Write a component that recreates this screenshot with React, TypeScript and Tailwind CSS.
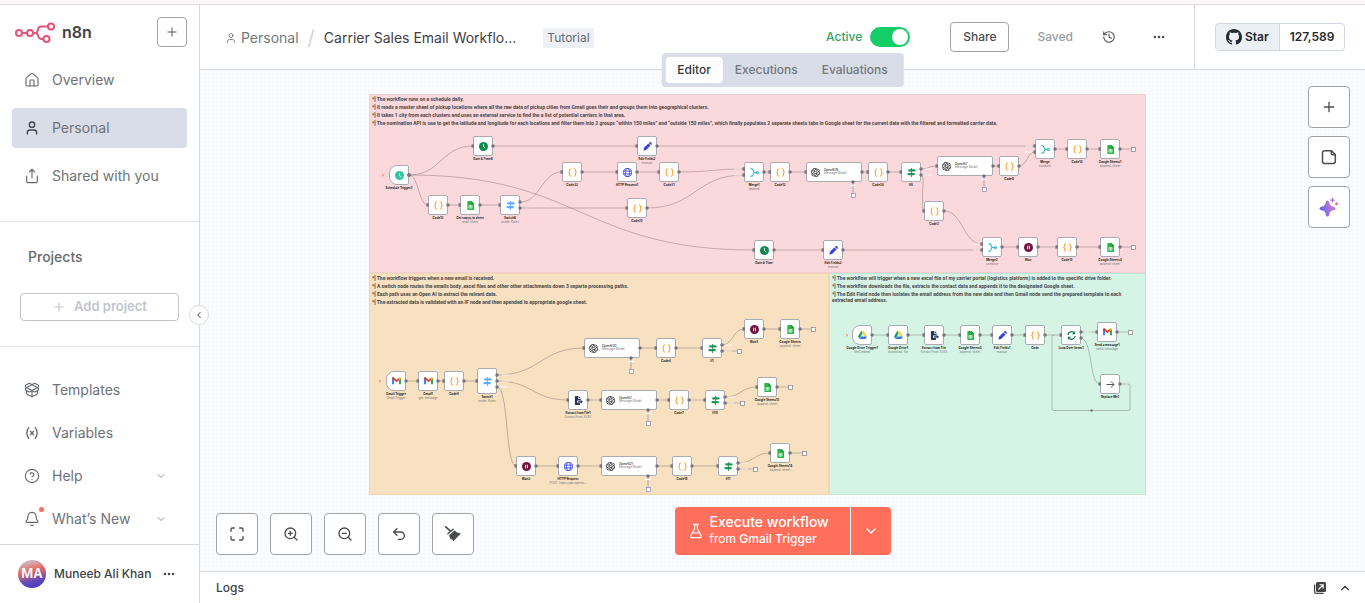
import React from "react";
import {
  Bell,
  ChevronDown,
  ChevronLeft,
  ChevronUp,
  CircleHelp,
  Ellipsis,
  FlaskConical,
  History,
  House,
  Maximize,
  PackageOpen,
  Plus,
  Share,
  Undo2,
  User,
  ZoomIn,
  ZoomOut,
} from "lucide-react";

type Kind =
  | "clock"
  | "date"
  | "edit"
  | "code"
  | "http"
  | "sheets"
  | "switch"
  | "merge"
  | "openai"
  | "if"
  | "wait"
  | "gmail"
  | "file"
  | "drive"
  | "loop"
  | "arrow";

type WorkflowNode = {
  x: number;
  y: number;
  kind: Kind;
  label: string;
  sub?: string;
  trigger?: boolean;
};

/* Workflow coordinates of the board's top left corner. */
const ORIGIN_X = 369;
const ORIGIN_Y = 94;

const nodes: WorkflowNode[] = [
  { x: 399, y: 175, kind: "clock", label: "Schedule Trigger3", trigger: true },
  { x: 483, y: 146, kind: "date", label: "Date & Time6" },
  { x: 647, y: 146, kind: "edit", label: "Edit Fields2", sub: "manual" },
  { x: 572, y: 172, kind: "code", label: "Code33" },
  { x: 627, y: 172, kind: "http", label: "HTTP Request1" },
  { x: 669, y: 172, kind: "code", label: "Code21" },
  { x: 438, y: 205, kind: "code", label: "Code12" },
  { x: 470, y: 205, kind: "sheets", label: "Get row(s) in sheet", sub: "read: sheet" },
  { x: 510, y: 205, kind: "switch", label: "Switch6", sub: "mode: Rules" },
  { x: 637, y: 208, kind: "code", label: "Code22" },
  { x: 754, y: 172, kind: "merge", label: "Merge1", sub: "append" },
  { x: 780, y: 172, kind: "code", label: "Code13" },
  { x: 834, y: 172, kind: "openai", label: "OpenAI76", sub: "Message Model" },
  { x: 878, y: 172, kind: "code", label: "Code24" },
  { x: 911, y: 172, kind: "if", label: "If6" },
  { x: 965, y: 166, kind: "openai", label: "OpenAI7", sub: "Message Model" },
  { x: 1009, y: 166, kind: "code", label: "Code6" },
  { x: 1045, y: 149, kind: "merge", label: "Merge", sub: "combine" },
  { x: 1077, y: 149, kind: "code", label: "Code14" },
  { x: 1110, y: 149, kind: "sheets", label: "Google Sheets1", sub: "append: sheet" },
  { x: 934, y: 211, kind: "code", label: "Code2" },
  { x: 764, y: 250, kind: "date", label: "Date & Time" },
  { x: 833, y: 250, kind: "edit", label: "Edit Fields3", sub: "manual" },
  { x: 992, y: 247, kind: "merge", label: "Merge2", sub: "combine" },
  { x: 1028, y: 247, kind: "wait", label: "Wait" },
  { x: 1067, y: 247, kind: "code", label: "Code15" },
  { x: 1110, y: 247, kind: "sheets", label: "Google Sheets4", sub: "append: sheet" },
  { x: 396, y: 381, kind: "gmail", label: "Gmail Trigger", sub: "Gmail Trigger", trigger: true },
  { x: 428, y: 381, kind: "gmail", label: "Gmail1", sub: "get: message" },
  { x: 454, y: 381, kind: "code", label: "Code8" },
  { x: 487, y: 381, kind: "switch", label: "Switch1", sub: "mode: Rules" },
  { x: 612, y: 348, kind: "openai", label: "OpenAI20", sub: "Message Model" },
  { x: 666, y: 348, kind: "code", label: "Code4" },
  { x: 712, y: 348, kind: "if", label: "If1" },
  { x: 754, y: 329, kind: "wait", label: "Wait2" },
  { x: 790, y: 329, kind: "sheets", label: "Google Sheets", sub: "append: sheet" },
  { x: 578, y: 400, kind: "file", label: "Extract from File1", sub: "Extract From XLSX" },
  { x: 629, y: 400, kind: "openai", label: "OpenAI2", sub: "Message Model" },
  { x: 679, y: 400, kind: "code", label: "Code7" },
  { x: 715, y: 400, kind: "if", label: "If10" },
  { x: 767, y: 387, kind: "sheets", label: "Google Sheets15", sub: "append: sheet" },
  { x: 526, y: 466, kind: "wait", label: "Wait3" },
  { x: 568, y: 466, kind: "http", label: "HTTP Request", sub: "POST: https://api.openai..." },
  { x: 629, y: 466, kind: "openai", label: "OpenAI21", sub: "Message Model" },
  { x: 682, y: 466, kind: "code", label: "Code16" },
  { x: 728, y: 466, kind: "if", label: "If11" },
  { x: 780, y: 453, kind: "sheets", label: "Google Sheets14", sub: "append: sheet" },
  { x: 862, y: 335, kind: "drive", label: "Google Drive Trigger1", sub: "fileCreated", trigger: true },
  { x: 898, y: 335, kind: "drive", label: "Google Drive1", sub: "download: file" },
  { x: 934, y: 335, kind: "file", label: "Extract from File", sub: "Extract From XLSX" },
  { x: 970, y: 335, kind: "sheets", label: "Google Sheets5", sub: "append: sheet" },
  { x: 1002, y: 335, kind: "edit", label: "Edit Fields1", sub: "manual" },
  { x: 1035, y: 335, kind: "code", label: "Code" },
  { x: 1071, y: 335, kind: "loop", label: "Loop Over Items1" },
  { x: 1107, y: 332, kind: "gmail", label: "Send a message1", sub: "send: message" },
  { x: 1110, y: 384, kind: "arrow", label: "Replace Me1" },
];

/* from x, from y, to x, to y */
const edges: number[][] = [
  [409, 175, 473, 146],
  [409, 175, 428, 205],
  [409, 175, 754, 250],
  [493, 146, 637, 146],
  [657, 146, 1035, 146],
  [448, 205, 460, 205],
  [480, 205, 500, 205],
  [520, 202, 562, 172],
  [520, 208, 627, 208],
  [582, 172, 617, 172],
  [637, 172, 659, 172],
  [679, 172, 744, 169],
  [647, 208, 744, 175],
  [764, 172, 770, 172],
  [790, 172, 806, 172],
  [862, 172, 868, 172],
  [888, 172, 901, 172],
  [921, 169, 937, 166],
  [993, 166, 999, 166],
  [1019, 166, 1035, 152],
  [1055, 149, 1067, 149],
  [1087, 149, 1100, 149],
  [944, 211, 982, 244],
  [774, 250, 823, 250],
  [843, 250, 982, 250],
  [1002, 247, 1018, 247],
  [1038, 247, 1057, 247],
  [1077, 247, 1100, 247],
  [406, 381, 418, 381],
  [438, 381, 444, 381],
  [464, 381, 477, 381],
  [497, 375, 584, 348],
  [497, 381, 568, 400],
  [640, 348, 656, 348],
  [676, 348, 702, 348],
  [722, 345, 744, 329],
  [764, 329, 780, 329],
  [588, 400, 601, 400],
  [657, 400, 669, 400],
  [689, 400, 705, 400],
  [725, 397, 757, 387],
  [536, 466, 558, 466],
  [578, 466, 601, 466],
  [657, 466, 672, 466],
  [692, 466, 718, 466],
  [738, 463, 770, 453],
  [872, 335, 888, 335],
  [908, 335, 924, 335],
  [944, 335, 960, 335],
  [980, 335, 992, 335],
  [1012, 335, 1025, 335],
  [1045, 335, 1061, 335],
  [1081, 332, 1097, 332],
];

/* from x, y, plus-box x */
const openEnds: number[][] = [
  [1120, 149, 1133],
  [1120, 247, 1133],
  [800, 329, 813],
  [722, 351, 739],
  [777, 387, 790],
  [725, 403, 742],
  [790, 453, 804],
  [738, 469, 755],
  [1117, 332, 1130],
];

/* Output and input names beside branching nodes. */
const portNames: number[][] = [
  [734, 169], [734, 175], [925, 169], [925, 175], [1025, 146], [1025, 152],
  [973, 244], [973, 250], [502, 375], [502, 381], [500, 387], [725, 345],
  [725, 351], [728, 397], [728, 403], [741, 463], [741, 469], [1084, 332], [1084, 338],
];

function NodeGlyph({ kind }: { kind: Kind }) {
  switch (kind) {
    case "clock":
    case "date":
      return (
        <svg viewBox="0 0 20 20" className="size-[9px]">
          <circle cx="10" cy="10" r="10" fill={kind === "clock" ? "#31c49f" : "#0f8a4b"} />
          <path d="M10 4v6.500l4 2.500" fill="none" stroke="#fff" strokeWidth="2" />
        </svg>
      );
    case "edit":
      return (
        <svg viewBox="0 0 20 20" className="size-[9px]" fill="#3a42d8">
          <path d="M1 19l1.200-6L12 3.200 16.800 8 7 17.800zM13.200 2l1.300-1.300c1-1 2.200-.7 3 .1l1.700 1.700c.8.800 1 2 .1 3L18 6.800z" />
        </svg>
      );
    case "code":
      return (
        <svg viewBox="0 0 20 20" className="size-[9px]" fill="none" stroke="#ff9922" strokeWidth="2.200">
          <path d="M7 2H5.500C4 2 3.500 3 3.500 4.500v3C3.500 9 2.800 10 1 10c1.800 0 2.500 1 2.500 2.500v3C3.500 17 4 18 5.500 18H7M13 2h1.500c1.500 0 2 1 2 2.500v3c0 1.500.7 2.500 2.500 2.500-1.800 0-2.500 1-2.500 2.500v3c0 1.500-.5 2.500-2 2.500H13" />
        </svg>
      );
    case "http":
      return (
        <svg viewBox="0 0 20 20" className="size-[9px]" fill="none" stroke="#3a42e8" strokeWidth="2">
          <circle cx="10" cy="10" r="9" />
          <ellipse cx="10" cy="10" rx="4.500" ry="9" />
          <path d="M1.500 7h17M1.500 13h17" />
        </svg>
      );
    case "sheets":
      return (
        <svg viewBox="0 0 20 20" className="size-[9px]">
          <path d="M3 1.500C3 .7 3.700 0 4.500 0H12l6 6v12.500c0 .8-.7 1.500-1.500 1.500h-12c-.8 0-1.500-.7-1.500-1.500z" fill="#28b446" />
          <path d="M12 0l6 6h-6z" fill="#1a8a35" />
          <path d="M6.500 10h7v6h-7zM6.500 13h7M10 10v6" fill="none" stroke="#fff" strokeWidth="1.300" />
        </svg>
      );
    case "switch":
    case "if":
      return (
        <svg viewBox="0 0 20 20" className="size-[9px]" fill={kind === "if" ? "#1c9650" : "#5aaeff"}>
          <path d="M9 0h2v20H9z" />
          <path d="M3 3h14l3 2.500L17 8H3z" />
          <path d="M17 11H3l-3 2.500L3 16h14z" />
        </svg>
      );
    case "merge":
      return (
        <svg viewBox="0 0 20 20" className="size-[9px]" fill="none" stroke="#2fb8c2" strokeWidth="2.400">
          <path d="M1 2h3c2 0 2.500 1.500 3 3.500S8 10 10 10h4M1 18h3c2 0 2.500-1.500 3-3.500S8 10 10 10" />
          <circle cx="16.500" cy="10" r="2.300" />
        </svg>
      );
    case "openai":
      return (
        <svg viewBox="0 0 24 24" className="size-[9px]" fill="#000">
          <path d="M22.282 9.821a5.985 5.985 0 0 0-.516-4.911 6.046 6.046 0 0 0-6.510-2.900A6.065 6.065 0 0 0 4.981 4.182a5.985 5.985 0 0 0-3.998 2.900 6.046 6.046 0 0 0 .743 7.097 5.980 5.980 0 0 0 .511 4.911 6.051 6.051 0 0 0 6.515 2.900A5.985 5.985 0 0 0 13.260 24a6.056 6.056 0 0 0 5.772-4.206 5.989 5.989 0 0 0 3.998-2.900 6.056 6.056 0 0 0-.748-7.073zm-9.022 12.608a4.476 4.476 0 0 1-2.876-1.041l.142-.08 4.778-2.758a.795.795 0 0 0 .393-.681v-6.737l2.020 1.169a.071.071 0 0 1 .038.052v5.583a4.504 4.504 0 0 1-4.495 4.494zm-9.661-4.125a4.471 4.471 0 0 1-.535-3.014l.142.085 4.783 2.758a.771.771 0 0 0 .781 0l5.843-3.369v2.332a.080.080 0 0 1-.033.062L9.740 19.950a4.499 4.499 0 0 1-6.141-1.646zM2.341 7.896a4.485 4.485 0 0 1 2.366-1.973V11.600a.766.766 0 0 0 .388.677l5.814 3.354-2.020 1.169a.076.076 0 0 1-.071 0l-4.830-2.787A4.504 4.504 0 0 1 2.341 7.872zm16.596 3.856L13.104 8.364 15.119 7.200a.076.076 0 0 1 .071 0l4.830 2.791a4.494 4.494 0 0 1-.677 8.104v-5.677a.790.790 0 0 0-.407-.667zm2.011-3.023l-.142-.085-4.774-2.782a.776.776 0 0 0-.785 0L9.409 9.230V6.897a.066.066 0 0 1 .028-.062l4.830-2.787a4.499 4.499 0 0 1 6.680 4.660zM8.307 12.863l-2.020-1.164a.080.080 0 0 1-.038-.057V6.074a4.499 4.499 0 0 1 7.376-3.454l-.142.081L8.704 5.459a.795.795 0 0 0-.393.681zm1.098-2.365l2.602-1.500 2.607 1.500v2.999l-2.597 1.500-2.607-1.500Z" />
        </svg>
      );
    case "wait":
      return (
        <svg viewBox="0 0 20 20" className="size-[9px]">
          <circle cx="10" cy="10" r="10" fill="#701440" />
          <path d="M8 6v8M12 6v8" stroke="#fff" strokeWidth="2" />
        </svg>
      );
    case "gmail":
      return (
        <svg viewBox="0 0 20 16" className="w-[9px]">
          <path d="M0 16V3l4.500 3.500V16z" fill="#4285f4" />
          <path d="M20 16V3l-4.500 3.500V16z" fill="#34a853" />
          <path d="M4.500 1.500L10 6l5.500-4.500v5.500L10 11.500 4.500 7z" fill="#ea4335" />
          <path d="M0 3C0 .5 2.800-.5 4.500 1.500V7L0 3.500z" fill="#c5221f" />
          <path d="M20 3c0-2.500-2.800-3.500-4.500-1.500V7L20 3.500z" fill="#fbbc04" />
        </svg>
      );
    case "file":
      return (
        <svg viewBox="0 0 20 20" className="size-[9px]" fill="#28335f">
          <path d="M2 1.500C2 .7 2.700 0 3.500 0H9v6h6v4H7v5h6v5H3.500c-.8 0-1.500-.7-1.500-1.500z" />
          <path d="M10.500 0L15 4.500h-4.500zM9 11.500h6V9l5 4-5 4v-2.500H9z" />
        </svg>
      );
    case "drive":
      return (
        <svg viewBox="0 0 20 18" className="w-[9px]">
          <path d="M7 0h6l-3 5.500L3.500 17 0 12z" fill="#11a861" />
          <path d="M7 0h6l7 12h-6z" fill="#ffcf48" />
          <path d="M6.500 12H20l-3.500 6h-13z" fill="#3777e3" />
        </svg>
      );
    case "loop":
      return (
        <svg viewBox="0 0 20 20" className="size-[9px]" fill="none" stroke="#16705a" strokeWidth="2.800">
          <path d="M2 9a8 8 0 0 1 14.500-4M18 11a8 8 0 0 1-14.500 4" />
          <path d="M18 0v7h-7zM2 20v-7h7z" fill="#16705a" stroke="none" />
        </svg>
      );
    case "arrow":
      return (
        <svg viewBox="0 0 20 20" className="size-[9px]" fill="none" stroke="#555" strokeWidth="2.200">
          <path d="M1 10h17M11 3l7 7-7 7" />
        </svg>
      );
  }
}

function NodeCard({ node }: { node: WorkflowNode }) {
  const wide = node.kind === "openai";
  const tall = node.label === "Switch1";
  const left = node.x - ORIGIN_X - (wide ? 28 : 10);
  const top = node.y - ORIGIN_Y - (tall ? 13 : 10);
  if (wide) {
    return (
      <div
        className="absolute flex h-5 w-14 items-center gap-1 rounded-xs border border-[#a9abb3] bg-white pl-1"
        style={{ left, top }}
      >
        <NodeGlyph kind={node.kind} />
        <div className="flex flex-col text-[3px] leading-[3px] font-medium whitespace-nowrap text-[#222]">
          <span>{node.label}</span>
          <span className="font-normal text-[#777]">{node.sub}</span>
        </div>
      </div>
    );
  }
  return (
    <div className="absolute flex w-5 flex-col items-center gap-[2px]" style={{ left, top }}>
      <div
        className={`flex w-5 shrink-0 items-center justify-center border border-[#a9abb3] bg-white ${
          tall ? "h-[26px]" : "h-5"
        } ${node.trigger ? "rounded-l-lg rounded-r-xs" : "rounded-xs"}`}
      >
        <NodeGlyph kind={node.kind} />
      </div>
      <div className="flex flex-col items-center gap-px text-[3px] leading-[3px] font-bold whitespace-nowrap text-[#222]">
        <span>{node.label}</span>
        {node.sub && <span className="font-normal text-[#777]">{node.sub}</span>}
      </div>
    </div>
  );
}

function curve([x1, y1, x2, y2]: number[]) {
  const mid = (x1 + x2) / 2;
  return `M${x1} ${y1}C${mid} ${y1} ${mid} ${y2} ${x2} ${y2}`;
}

function Note({ className, lines }: { className: string; lines: string[] }) {
  return (
    <div
      className={`px-[2px] pt-px font-['Roboto',sans-serif] text-[5px] leading-[6px] font-bold text-[#4a4546] ${className}`}
    >
      <div className="flex flex-col gap-[2px]">
        {lines.map((line) => (
          <p key={line}>{line}</p>
        ))}
      </div>
    </div>
  );
}

function Workflow() {
  const aiNodes = nodes.filter((n) => n.kind === "openai");
  return (
    <div className="absolute top-6 left-[169px] flex h-[401px] w-[777px] flex-col">
      <Note
        className="h-[179px] shrink-0 border border-[#f3ced2] bg-[#fbd8db]"
        lines={[
          "*] The workflow runs on a schedule daily.",
          "*] It reads a master sheet of pickup locations where all the raw data of pickup cities from Gmail goes their and groups them into geographical clusters.",
          "*] It takes 1 city from each clusters and uses an external service to find the a list of potential carriers in that area.",
          "*] The nomination API is use to get the latitude and longitude for each locations and filter them into 2 groups “within 150 miles” and “outside 150 miles”, which finally populates 2 separate sheets tabs in Google sheet for the current date with the filtered and formatted carrier data.",
        ]}
      />
      <div className="flex flex-1">
        <Note
          className="w-[460px] shrink-0 border border-[#efd7b3] bg-[#f7e1c1]"
          lines={[
            "*] The workflow triggers when a new email is received.",
            "*] A switch node routes the emails body ,excel files and other other attachments down 3 separte processing paths.",
            "*] Each path uses an Open AI to extract the relvant data.",
            "*] The extracted data is validated with an IF node and then apended to appropriate google sheet.",
          ]}
        />
        <Note
          className="flex-1 border border-[#c0e8d3] bg-[#d6f4e5]"
          lines={[
            "*] The workflow will trigger when a new excel file of my carrier portal (logistics platform) is added to the specific drive folder.",
            "*] The workflow downloads the file, extracts the contact data and appends it to the designated Google sheet.",
            "*] The Edit Field node then isolates the email address from the new data and then Gmail node send the prepared template to each extracted email address.",
          ]}
        />
      </div>
      <svg
        viewBox="369 94 777 401"
        className="absolute inset-0 size-full"
        fill="none"
        stroke="#5b5157"
        strokeOpacity="0.5"
        strokeWidth="0.7"
        aria-hidden="true"
      >
        {edges.map((e) => (
          <path key={e.join()} d={curve(e)} />
        ))}
        <path d="M921 175c4 2 1 14 1.500 26 0 6 0 10 1.500 10" />
        <path d="M497 387c12 0 8 79 19 79" />
        <path d="M1081 338c12 2 8 46 19 46" />
        <path d="M1120 384h8q2 0 2 2v22.500q0 2-2 2h-74q-2 0-2-2V337q0-2 2-2" />
        {openEnds.map(([x, y, end]) => (
          <path key={`${x}-${y}`} d={`M${x} ${y}H${end - 2}`} />
        ))}
      </svg>
      {nodes.map((n) => (
        <NodeCard key={`${n.x}-${n.y}`} node={n} />
      ))}
      <svg viewBox="369 94 777 401" className="absolute inset-0 size-full" aria-hidden="true">
        {portNames.map(([x, y]) => (
          <path key={`${x}-${y}`} d={`M${x} ${y}h7`} stroke="#fff" strokeOpacity="0.75" />
        ))}
        {edges.map(([x1, y1, x2, y2]) => (
          <g key={`${x1}-${y1}-${x2}-${y2}`} fill="#77757c">
            <circle cx={x1} cy={y1} r="1.700" />
            <rect x={x2 - 1.5} y={y2 - 1.7} width="2.500" height="3.400" />
          </g>
        ))}
        <g fill="#77757c">
          <circle cx="921" cy="175" r="1.700" />
          <circle cx="497" cy="387" r="1.700" />
          <circle cx="1081" cy="338" r="1.700" />
          <circle cx="1120" cy="384" r="1.700" />
          <circle cx="1091.500" cy="410.500" r="1.200" />
          <rect x="922.500" y="209.300" width="2.500" height="3.400" />
          <rect x="514.500" y="464.300" width="2.500" height="3.400" />
          <rect x="1098.500" y="382.300" width="2.500" height="3.400" />
        </g>
        {openEnds.map(([x, y, end]) => (
          <g key={`${x}-${y}`}>
            <circle cx={x} cy={y} r="1.700" fill="#77757c" />
            <rect x={end - 1.5} y={y - 1.5} width="4" height="4" fill="#fff" stroke="#8e8a90" strokeWidth="0.800" />
          </g>
        ))}
        {aiNodes.map(({ x, y }) => (
          <g key={`${x}-${y}`} stroke="#8d88ad" strokeWidth="0.700">
            <path d={`M${x + 19} ${y + 10}v11`} />
            <path d={`M${x + 16} ${y + 13.5}h6`} stroke="#fff" strokeWidth="1.200" />
            <path d={`M${x + 19} ${y + 8}l2 2-2 2-2-2z`} fill="#6d6a90" stroke="none" />
            <rect x={x + 17.5} y={y + 21.5} width="4" height="4" fill="#fff" />
          </g>
        ))}
        {[[383, 175], [380, 381], [847, 335]].map(([x, y]) => (
          <path key={x} d={`M${x} ${y - 1.8}l-1.300 2.100h1.200l-.3 1.700 1.500-2.200h-1.200z`} fill="#ff6d5a" />
        ))}
      </svg>
    </div>
  );
}

function Logo() {
  return (
    <svg viewBox="0 0 40 22" className="h-[22px] w-10" fill="none" stroke="#e6537a" strokeWidth="2" aria-hidden="true">
      <circle cx="4" cy="12" r="3" />
      <circle cx="15" cy="12" r="3" />
      <circle cx="36" cy="5.500" r="3" />
      <circle cx="31.500" cy="18" r="3" />
      <path d="M7 12h5M18 12h2.500c2.500 0 2-2.500 2.600-4.200.5-1.600 1.700-2.300 3.300-2.300H33M20.500 12c3.500 0 1.500 6 6 6h2" />
    </svg>
  );
}

function GithubMark() {
  return (
    <svg viewBox="0 0 16 16" className="size-4" fill="currentColor" aria-hidden="true">
      <path d="M8 0c4.420 0 8 3.580 8 8a8.013 8.013 0 0 1-5.450 7.590c-.4.080-.55-.17-.55-.38 0-.27.01-1.130.01-2.200 0-.75-.25-1.230-.54-1.480 1.780-.2 3.650-.88 3.650-3.950 0-.88-.31-1.590-.82-2.150.08-.2.36-1.020-.08-2.120 0 0-.67-.22-2.200.82-.64-.18-1.320-.27-2-.27-.68 0-1.360.09-2 .27-1.530-1.030-2.200-.82-2.200-.82-.44 1.100-.16 1.920-.08 2.120-.51.56-.82 1.280-.82 2.150 0 3.060 1.860 3.750 3.640 3.950-.23.2-.44.55-.51 1.070-.46.21-1.610.55-2.330-.66-.15-.24-.6-.83-1.230-.82-.67.01-.27.38.01.53.34.19.73.9.82 1.130.16.45.68 1.310 2.690.94 0 .67.01 1.300.01 1.490 0 .21-.15.45-.55.38A7.995 7.995 0 0 1 0 8c0-4.420 3.580-8 8-8Z" />
    </svg>
  );
}

function VariableIcon() {
  return (
    <svg viewBox="0 0 24 24" className="size-4" fill="none" stroke="currentColor" strokeWidth="2" strokeLinecap="round" aria-hidden="true">
      <path d="M7 4C3.500 9 3.500 15 7 20M17 4c3.500 5 3.500 11 0 16M9.500 9.500l5 5M14.500 9.500l-5 5" />
    </svg>
  );
}

function BroomIcon() {
  return (
    <svg viewBox="0 0 18 18" className="size-[18px]" fill="currentColor" aria-hidden="true">
      <path d="M1.700 1.900l4.800 4.300" fill="none" stroke="currentColor" strokeWidth="1.700" strokeLinecap="round" />
      <path d="M3.900 8.800L9.100 4.300" fill="none" stroke="currentColor" strokeWidth="1.400" strokeLinecap="round" />
      <path d="M4.900 10.500l5.600-4.900 2.700 1.900 3.500 1-1.100 1.600-1.200.8-5 5.400-1.400-2.200-1 .6z" />
    </svg>
  );
}

function NoteIcon() {
  return (
    <svg viewBox="0 0 16 16" className="size-4" fill="none" stroke="currentColor" strokeWidth="1.500" strokeLinejoin="round" aria-hidden="true">
      <path d="M3.500 1.700h7L14.300 5.500v7a2 2 0 0 1-2 2h-8.800a2 2 0 0 1-2-2V3.700a2 2 0 0 1 2-2z" />
      <path d="M10.300 1.900v2.300a1.500 1.500 0 0 0 1.500 1.500h2.300" />
    </svg>
  );
}

function SparkleIcon() {
  return (
    <svg viewBox="0 0 20 20" className="size-5" aria-hidden="true">
      <defs>
        <linearGradient id="spark" x1="0" y1="0.600" x2="1" y2="0.300">
          <stop offset="0" stopColor="#5b60e8" />
          <stop offset="0.550" stopColor="#a874dc" />
          <stop offset="1" stopColor="#c97ad0" />
        </linearGradient>
      </defs>
      <path
        fill="url(#spark)"
        d="M8.500 3.500c1.100 0 1.500.8 1.800 2.300.5 2.500 1.400 3.400 3.900 3.900 1.500.3 2.300.8 2.300 1.800s-.8 1.500-2.300 1.800c-2.500.5-3.400 1.400-3.900 3.900-.3 1.500-.7 2.300-1.800 2.300s-1.500-.8-1.800-2.300c-.5-2.500-1.400-3.400-3.900-3.900-1.500-.3-2.300-.8-2.300-1.800s.8-1.500 2.300-1.800c2.500-.5 3.400-1.400 3.900-3.900.3-1.500.7-2.300 1.800-2.300z"
      />
      <path d="M13.500.8v4.600M11.200 3.100h4.600" stroke="#a874dc" strokeWidth="1.200" />
      <path d="M17.500 5v3.600M15.700 6.800h3.600" stroke="#d877a6" strokeWidth="1.200" />
    </svg>
  );
}

function PopOutIcon() {
  return (
    <svg viewBox="0 0 12 12" className="size-3" aria-hidden="true">
      <path d="M.6 2.500v7.400c0 .9.600 1.500 1.500 1.500h7.400" fill="none" stroke="#444" strokeWidth="1.200" />
      <rect x="2" width="10" height="10" rx="1.500" fill="#444" />
      <path d="M4.500 7.500L9 3M5.500 2.800h3.700v3.700" fill="none" stroke="#fff" strokeWidth="1.100" />
    </svg>
  );
}

function NavLink({ icon, label, active, chevron }: { icon: React.ReactNode; label: string; active?: boolean; chevron?: boolean }) {
  return (
    <a
      href="#"
      className={`flex h-10 items-center gap-3 rounded px-3 text-sm text-[#6f7278] ${active ? "bg-[#d9dde8]" : ""}`}
    >
      <span className={`flex size-4 items-center justify-center ${active ? "text-[#444]" : "text-[#666a70]"}`}>{icon}</span>
      <span>{label}</span>
      {chevron && <ChevronDown className="mr-2 ml-auto size-3" strokeWidth={1.5} />}
    </a>
  );
}

function Sidebar() {
  return (
    <aside className="relative flex w-[200px] shrink-0 flex-col border-r border-[#d8dae3] bg-white">
      <div className="flex items-center justify-between pt-3 pr-3 pl-[15px]">
        <div className="flex items-center gap-[7px]">
          <Logo />
          <span className="text-base font-semibold text-[#414244]">n8n</span>
        </div>
        <button aria-label="Create" className="flex size-[30px] items-center justify-center rounded border border-[#9ea2ad] text-[#555]">
          <Plus className="size-3.5" strokeWidth={1.7} />
        </button>
      </div>
      <nav className="mt-[13px] flex flex-col gap-2 px-3" aria-label="Main">
        <NavLink icon={<House className="size-4" strokeWidth={1.7} />} label="Overview" />
        <NavLink icon={<User className="size-4" strokeWidth={2} />} label="Personal" active />
        <NavLink icon={<Share className="size-4" strokeWidth={1.7} />} label="Shared with you" />
      </nav>
      <section className="mt-[25px] border-y border-[#e4e5ea] px-5 pt-[25px] pb-[25px]">
        <h2 className="px-2 text-sm font-medium text-[#66696f]">Projects</h2>
        <button className="mt-[26px] flex h-7 w-full items-center justify-center gap-2 rounded border border-[#c2c4cc] text-[13px] font-semibold text-[#c3c5cf]">
          <Plus className="size-3.5" strokeWidth={2} />
          Add project
        </button>
      </section>
      <nav className="mt-auto flex flex-col gap-[3px] px-3 pb-[5px]" aria-label="Resources">
        <NavLink icon={<PackageOpen className="size-4" strokeWidth={1.7} />} label="Templates" />
        <NavLink icon={<VariableIcon />} label="Variables" />
        <NavLink icon={<CircleHelp className="size-4" strokeWidth={1.7} />} label="Help" chevron />
        <NavLink
          icon={
            <span className="relative">
              <Bell className="size-4" strokeWidth={1.7} />
              <span className="absolute -top-1 -right-1 size-[5px] rounded-full bg-[#ff6d5a]" />
            </span>
          }
          label="What’s New"
          chevron
        />
      </nav>
      <div className="flex h-[59px] shrink-0 items-center border-t border-[#d8dae3] pl-[18px]">
        <span className="flex size-7 items-center justify-center rounded-full bg-[linear-gradient(165deg,#c9cbd6_5%,#e8695f_40%,#5b48c0_72%,#4a3bb0)] text-[13px] font-semibold text-white">
          MA
        </span>
        <span className="ml-2 text-xs font-medium text-[#3f4145]">Muneeb Ali Khan</span>
        <button aria-label="Account menu" className="ml-[11px] text-[#444]">
          <Ellipsis className="size-3.5" strokeWidth={2.5} />
        </button>
      </div>
      <button
        aria-label="Collapse sidebar"
        className="absolute top-[300px] -right-[10px] z-20 flex size-5 items-center justify-center rounded-full border border-[#d8dae3] bg-white text-[#555]"
      >
        <ChevronLeft className="size-2.5" strokeWidth={2.5} />
      </button>
    </aside>
  );
}

function Header() {
  return (
    <header className="relative flex h-[65px] shrink-0 border-b border-[#d8dae3] bg-white">
      <div className="flex flex-1 items-center pt-px pl-[25px]">
        <a href="#" className="flex items-center gap-1 text-sm text-[#74777d]">
          <User className="size-3" strokeWidth={1.8} />
          Personal
        </a>
        <span className="mx-[9px] text-xl text-[#cfd2dc]">/</span>
        <h1 className="text-sm text-[#3f4145]">Carrier Sales Email Workflo...</h1>
        <span className="ml-[27px] flex h-5 items-center rounded-xs bg-[#eef0f5] px-1 text-xs text-[#66696f]">Tutorial</span>
      </div>
      <div className="flex items-center pr-7">
        <label htmlFor="active" className="mr-2 text-xs font-medium text-[#35a263]">
          Active
        </label>
        <input
          id="active"
          type="checkbox"
          role="switch"
          defaultChecked
          className="flex h-5 w-10 appearance-none items-center rounded-full bg-[#c2c4cc] px-0.5 before:size-4 before:rounded-full before:bg-white checked:justify-end checked:bg-[#13ce66]"
        />
        <button className="ml-10 h-[30px] rounded border border-[#9ea2ad] px-3 text-xs font-medium text-[#4a4c50]">Share</button>
        <span className="ml-7 text-xs font-medium text-[#999ca3]">Saved</span>
        <button aria-label="Version history" className="ml-7 flex size-4 items-center justify-center text-[#4a4c50]">
          <History className="size-3.5" strokeWidth={1.8} />
        </button>
        <button aria-label="More actions" className="ml-[35px] flex size-3.5 items-center justify-center text-[#4a4c50]">
          <Ellipsis className="size-3.5" strokeWidth={2.5} />
        </button>
      </div>
      <div className="flex w-[171px] items-center border-l border-[#d8dae3] pl-5">
        <div className="flex h-7 items-stretch rounded border border-[#d0d7de] text-xs font-semibold text-[#24292f]">
          <a href="#" className="flex items-center gap-[3px] rounded-l bg-[#ebf0f4] px-2.5">
            <GithubMark />
            Star
          </a>
          <a href="#" className="flex items-center border-l border-[#d0d7de] px-2.5">
            127,589
          </a>
        </div>
      </div>
      <div
        role="tablist"
        className="absolute top-12 left-1/2 z-10 flex h-[34px] -translate-x-1/2 items-center rounded bg-[#d9dde8] p-1 text-xs font-medium text-[#74777d]"
      >
        <button role="tab" aria-selected="true" className="h-full rounded bg-white px-3 text-[#35373b]">
          Editor
        </button>
        <button role="tab" aria-selected="false" className="h-full px-3">
          Executions
        </button>
        <button role="tab" aria-selected="false" className="h-full px-3">
          Evaluations
        </button>
      </div>
    </header>
  );
}

function CanvasButton({ label, children }: { label: string; children: React.ReactNode }) {
  return (
    <button
      aria-label={label}
      className="flex size-[42px] items-center justify-center rounded border border-[#9ea2ad] bg-white text-[#4a4c50]"
    >
      {children}
    </button>
  );
}

export default function App() {
  return (
    <div className="flex h-screen flex-col overflow-hidden bg-white font-['Inter',sans-serif]">
      <div className="h-[5px] shrink-0 border-b border-[#e2dde2] bg-[#fbf6f8]" />
      <div className="flex min-h-0 flex-1">
        <Sidebar />
        <div className="flex min-w-0 flex-1 flex-col">
          <Header />
          <main className="relative min-h-0 flex-1 overflow-hidden bg-[#fbfcfe] bg-[linear-gradient(#f8f9fc_1px,transparent_1px),linear-gradient(90deg,#f8f9fc_1px,transparent_1px)] bg-[size:4px_4px]">
            <Workflow />
            <div className="absolute top-4 right-[15px] flex flex-col gap-2">
              <CanvasButton label="Add node">
                <Plus className="size-4" strokeWidth={2} />
              </CanvasButton>
              <CanvasButton label="Add sticky note">
                <NoteIcon />
              </CanvasButton>
              <CanvasButton label="Assistant">
                <SparkleIcon />
              </CanvasButton>
            </div>
            <div className="absolute bottom-4 left-4 flex gap-3">
              <CanvasButton label="Fit to view">
                <Maximize className="size-4" strokeWidth={2} />
              </CanvasButton>
              <CanvasButton label="Zoom in">
                <ZoomIn className="size-4" strokeWidth={2} />
              </CanvasButton>
              <CanvasButton label="Zoom out">
                <ZoomOut className="size-4" strokeWidth={2} />
              </CanvasButton>
              <CanvasButton label="Undo">
                <Undo2 className="size-4" strokeWidth={2} />
              </CanvasButton>
              <CanvasButton label="Tidy up">
                <BroomIcon />
              </CanvasButton>
            </div>
            <div className="absolute bottom-4 left-1/2 flex h-12 -translate-x-1/2 gap-px text-white">
              <button className="flex w-[175px] items-center gap-[6px] rounded-l bg-[#ff6f5c] pl-[13px] text-left">
                <FlaskConical className="size-4 shrink-0" strokeWidth={1.7} />
                <span className="flex flex-col gap-px pb-[2px] whitespace-nowrap">
                  <span className="text-sm leading-4 font-medium">Execute workflow</span>
                  <span className="text-xs leading-4">
                    from <span className="font-medium">Gmail Trigger</span>
                  </span>
                </span>
              </button>
              <button aria-label="Choose trigger" className="flex w-10 items-center justify-center rounded-r bg-[#ff6f5c]">
                <ChevronDown className="size-4" strokeWidth={2} />
              </button>
            </div>
          </main>
          <footer className="flex h-8 shrink-0 items-center justify-between border-t border-[#d8dae3] bg-white pr-[13px] pl-4">
            <span className="text-xs font-medium text-[#3f4145]">Logs</span>
            <div className="flex items-center gap-3">
              <button aria-label="Pop out logs">
                <PopOutIcon />
              </button>
              <button aria-label="Open logs" className="text-[#444]">
                <ChevronUp className="size-3.5" strokeWidth={2} />
              </button>
            </div>
          </footer>
        </div>
      </div>
    </div>
  );
}
